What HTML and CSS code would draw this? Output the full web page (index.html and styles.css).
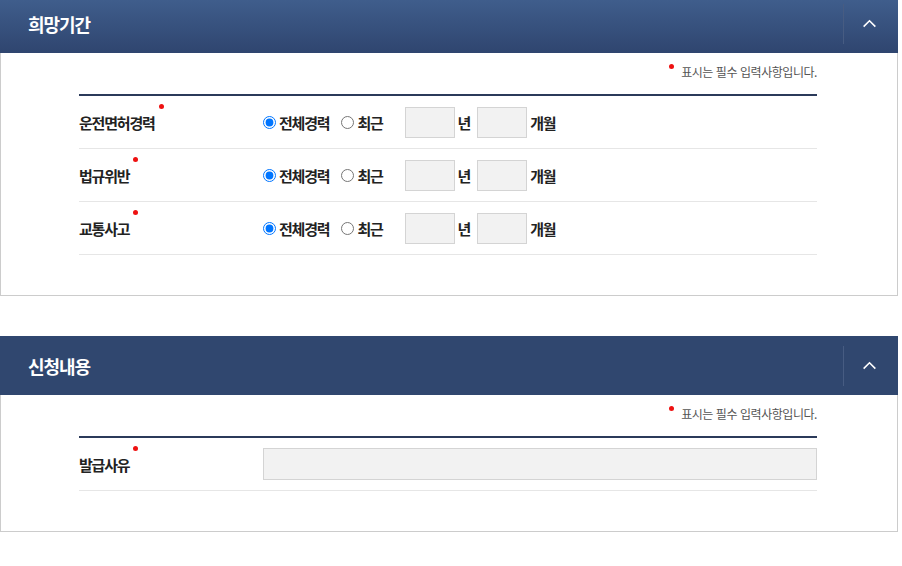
FILE: index.html
```html
<!DOCTYPE html>
<html lang="ko">
<head>
<meta charset="utf-8">
<link rel="stylesheet" href="styles.css">
</head>
<body>
<div class="page">
  <section class="panel">
    <header class="panel-head head-active">
      <h2 class="panel-title">희망기간</h2>
      <button class="toggle" type="button" aria-label="접기">
        <svg width="16" height="10" viewBox="0 0 16 10"><path d="M1.5 8.5 L8 2 L14.5 8.5" fill="none" stroke="#fff" stroke-width="1.8"/></svg>
      </button>
    </header>
    <div class="panel-body">
      <p class="notice"><span class="req-dot"></span>표시는 필수 입력사항입니다.</p>
      <div class="form">
        <div class="row">
          <div class="label">운전면허경력<span class="req-dot"></span></div>
          <div class="field">
            <label class="radio"><input type="radio" name="r1" checked>전체경력</label>
            <label class="radio radio-2"><input type="radio" name="r1">최근</label>
            <span class="box"></span><span class="unit">년</span>
            <span class="box"></span><span class="unit">개월</span>
          </div>
        </div>
        <div class="row">
          <div class="label">법규위반<span class="req-dot"></span></div>
          <div class="field">
            <label class="radio"><input type="radio" name="r2" checked>전체경력</label>
            <label class="radio radio-2"><input type="radio" name="r2">최근</label>
            <span class="box"></span><span class="unit">년</span>
            <span class="box"></span><span class="unit">개월</span>
          </div>
        </div>
        <div class="row">
          <div class="label">교통사고<span class="req-dot"></span></div>
          <div class="field">
            <label class="radio"><input type="radio" name="r3" checked>전체경력</label>
            <label class="radio radio-2"><input type="radio" name="r3">최근</label>
            <span class="box"></span><span class="unit">년</span>
            <span class="box"></span><span class="unit">개월</span>
          </div>
        </div>
      </div>
    </div>
  </section>

  <section class="panel">
    <header class="panel-head">
      <h2 class="panel-title">신청내용</h2>
      <button class="toggle" type="button" aria-label="접기">
        <svg width="16" height="10" viewBox="0 0 16 10"><path d="M1.5 8.5 L8 2 L14.5 8.5" fill="none" stroke="#fff" stroke-width="1.8"/></svg>
      </button>
    </header>
    <div class="panel-body">
      <p class="notice"><span class="req-dot"></span>표시는 필수 입력사항입니다.</p>
      <div class="form">
        <div class="row">
          <div class="label">발급사유<span class="req-dot"></span></div>
          <div class="field">
            <span class="wide-box"></span>
          </div>
        </div>
      </div>
    </div>
  </section>
</div>
</body>
</html>
```
FILE: styles.css
```css
* { box-sizing: border-box; }
html, body { margin: 0; padding: 0; background: #fff; }
body {
  font-family: "Noto Sans CJK KR", "Noto Sans", sans-serif;
  color: #222;
  overflow: hidden;
}
.page {
  width: 898px;
  margin-top: -6px;
}
.panel {
  margin-bottom: 40px;
}
.panel-head {
  height: 59px;
  background: #30476f;
  display: flex;
  align-items: center;
  justify-content: space-between;
  padding-left: 28px;
}
.head-active {
  background: linear-gradient(#41608f, #2f456f);
}
.panel-title {
  margin: 0;
  color: #fff;
  font-size: 18px;
  font-weight: 700;
  letter-spacing: -1.1px;
}
.toggle {
  width: 55px;
  height: 40px;
  border: 0;
  border-left: 1px solid #475c82;
  background: transparent;
  padding: 0 4px 0 0;
  display: flex;
  align-items: center;
  justify-content: center;
}
.toggle svg { width: 15px; height: 9px; }
.panel-body {
  border: 1px solid #cccccc;
  border-top: 0;
  padding: 0 80px 40px 78px;
}
.notice {
  margin: 0;
  height: 41px;
  padding-top: 11px;
  text-align: right;
  font-size: 12px;
  letter-spacing: -0.45px;
  color: #555;
  line-height: 16px;
}
.notice .req-dot {
  vertical-align: top;
  margin: 0 7px 0 0;
}
.req-dot {
  display: inline-block;
  width: 5px;
  height: 5px;
  border-radius: 50%;
  background: #ee1111;
}
.form {
  border-top: 2px solid #2b3a5a;
}
.row {
  display: flex;
  align-items: center;
  height: 53px;
  border-bottom: 1px solid #e6e6e6;
}
.label {
  width: 184px;
  flex: none;
  font-size: 15px;
  font-weight: 700;
  letter-spacing: -1.2px;
  position: relative;
  padding-top: 1px;
}
.label .req-dot {
  position: absolute;
  top: -7px;
  margin-left: 4px;
}
.field {
  flex: 1;
  display: flex;
  align-items: center;
}
.radio {
  display: flex;
  align-items: center;
  font-size: 15px;
  font-weight: 700;
  letter-spacing: -1.2px;
}
.radio input {
  margin: 0 3px 0 0;
  width: 13px;
  height: 13px;
}
.radio-2 { margin-left: 12px; }
.box {
  width: 50px;
  height: 31px;
  background: #f2f2f2;
  border: 1px solid #d4d4d4;
  margin-left: 7px;
}
.radio-2 + .box { margin-left: 22px; }
.unit {
  font-size: 15px;
  font-weight: 700;
  letter-spacing: -1.2px;
  margin-left: 3px;
}
.wide-box {
  flex: 1;
  height: 32px;
  background: #f2f2f2;
  border: 1px solid #d4d4d4;
}
```
